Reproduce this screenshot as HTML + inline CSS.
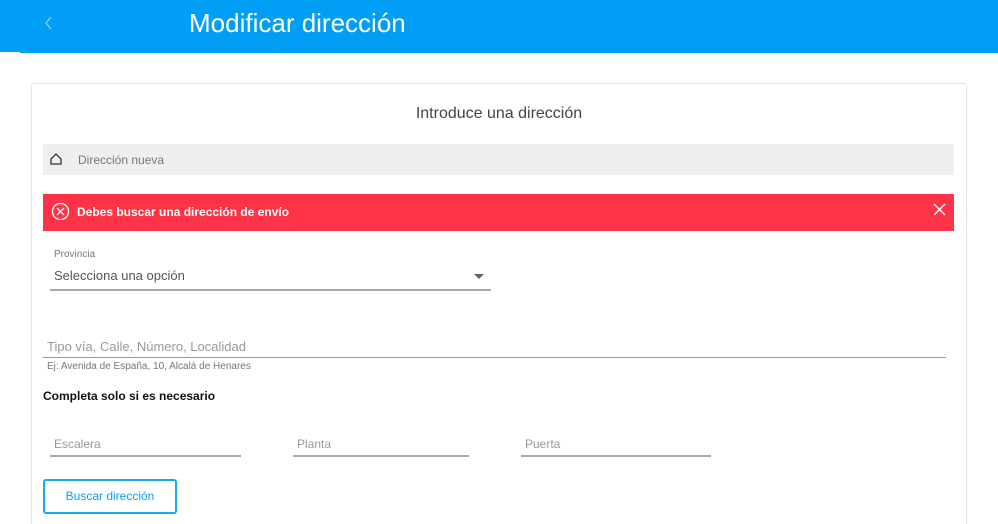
<!DOCTYPE html>
<html style="width:998px;height:524px;overflow:hidden"><head><meta charset="utf-8"><style>
body{margin:0;width:998px;height:524px;background:#fff;font-family:"Liberation Sans",sans-serif;position:relative;overflow:hidden}
.a{position:absolute}
</style></head><body>
<div class="a" style="left:0;top:0;width:998px;height:53px;background:#009ff5"></div>
<div class="a" style="left:0;top:52px;width:20px;height:2px;background:#fff"></div>
<div class="a" style="left:278px;top:53px;width:720px;height:1px;background:#e3f3fc"></div>
<svg class="a" style="left:44px;top:15px" width="10" height="16"><path d="M7 2L2 8L7 14" stroke="#8ccff5" stroke-width="1.3" fill="none"/></svg>
<div class="a" style="left:189px;top:8px;font-size:26px;color:#fff">Modificar dirección</div>
<div class="a" style="left:31px;top:83px;width:934px;height:460px;border:1px solid #e4e4e4;border-radius:3px"></div>
<div class="a" style="left:0;top:105px;width:998px;text-align:center;font-size:16px;color:#444">Introduce una dirección</div>
<div class="a" style="left:43px;top:144px;width:911px;height:31px;background:#efefef"></div>
<svg class="a" style="left:49px;top:152px" width="14" height="14"><path d="M2 7L7 2L12 7V12H2Z" stroke="#333" stroke-width="1.3" fill="none"/></svg>
<div class="a" style="left:78px;top:153px;font-size:12px;color:#777">Dirección nueva</div>
<div class="a" style="left:43px;top:194px;width:911px;height:37px;background:#ff3347"></div>
<svg class="a" style="left:51px;top:202px" width="19" height="19"><circle cx="9.5" cy="9.5" r="8" stroke="#fff" stroke-width="1.3" fill="none"/><path d="M6 6L13 13M13 6L6 13" stroke="#fff" stroke-width="1.3"/></svg>
<div class="a" style="left:77px;top:205px;font-size:12px;color:#fff;font-weight:bold">Debes buscar una dirección de envío</div>
<svg class="a" style="left:933px;top:203px" width="13" height="13"><path d="M1 1L12 12M12 1L1 12" stroke="#fff" stroke-width="1.3"/></svg>
<div class="a" style="left:54px;top:249px;font-size:10px;color:#777">Provincia</div>
<div class="a" style="left:54px;top:268px;font-size:13px;color:#555">Selecciona una opción</div>
<div class="a" style="left:474px;top:274px;width:0;height:0;border-left:5px solid transparent;border-right:5px solid transparent;border-top:5px solid #666"></div>
<div class="a" style="left:50px;top:289px;width:441px;height:2px;background:#aaa"></div>
<div class="a" style="left:47px;top:339px;font-size:13px;color:#999">Tipo vía, Calle, Número, Localidad</div>
<div class="a" style="left:43px;top:357px;width:903px;height:1px;background:#999"></div>
<div class="a" style="left:47px;top:361px;font-size:10px;color:#777">Ej: Avenida de España, 10, Alcalá de Henares</div>
<div class="a" style="left:43px;top:389px;font-size:12px;color:#111;font-weight:bold;font-weight:600">Completa solo si es necesario</div>
<div class="a" style="left:54px;top:437px;font-size:12px;color:#999">Escalera</div>
<div class="a" style="left:50px;top:455px;width:191px;height:2px;background:#aaa"></div>
<div class="a" style="left:297px;top:437px;font-size:12px;color:#999">Planta</div>
<div class="a" style="left:293px;top:455px;width:176px;height:2px;background:#aaa"></div>
<div class="a" style="left:525px;top:437px;font-size:12px;color:#999">Puerta</div>
<div class="a" style="left:521px;top:455px;width:190px;height:2px;background:#aaa"></div>
<div class="a" style="left:43px;top:479px;width:130px;height:31px;border:2px solid #19a9f0;border-radius:3px;text-align:center;line-height:31px;font-size:12px;color:#0a9ff0">Buscar dirección</div>
</body></html>
